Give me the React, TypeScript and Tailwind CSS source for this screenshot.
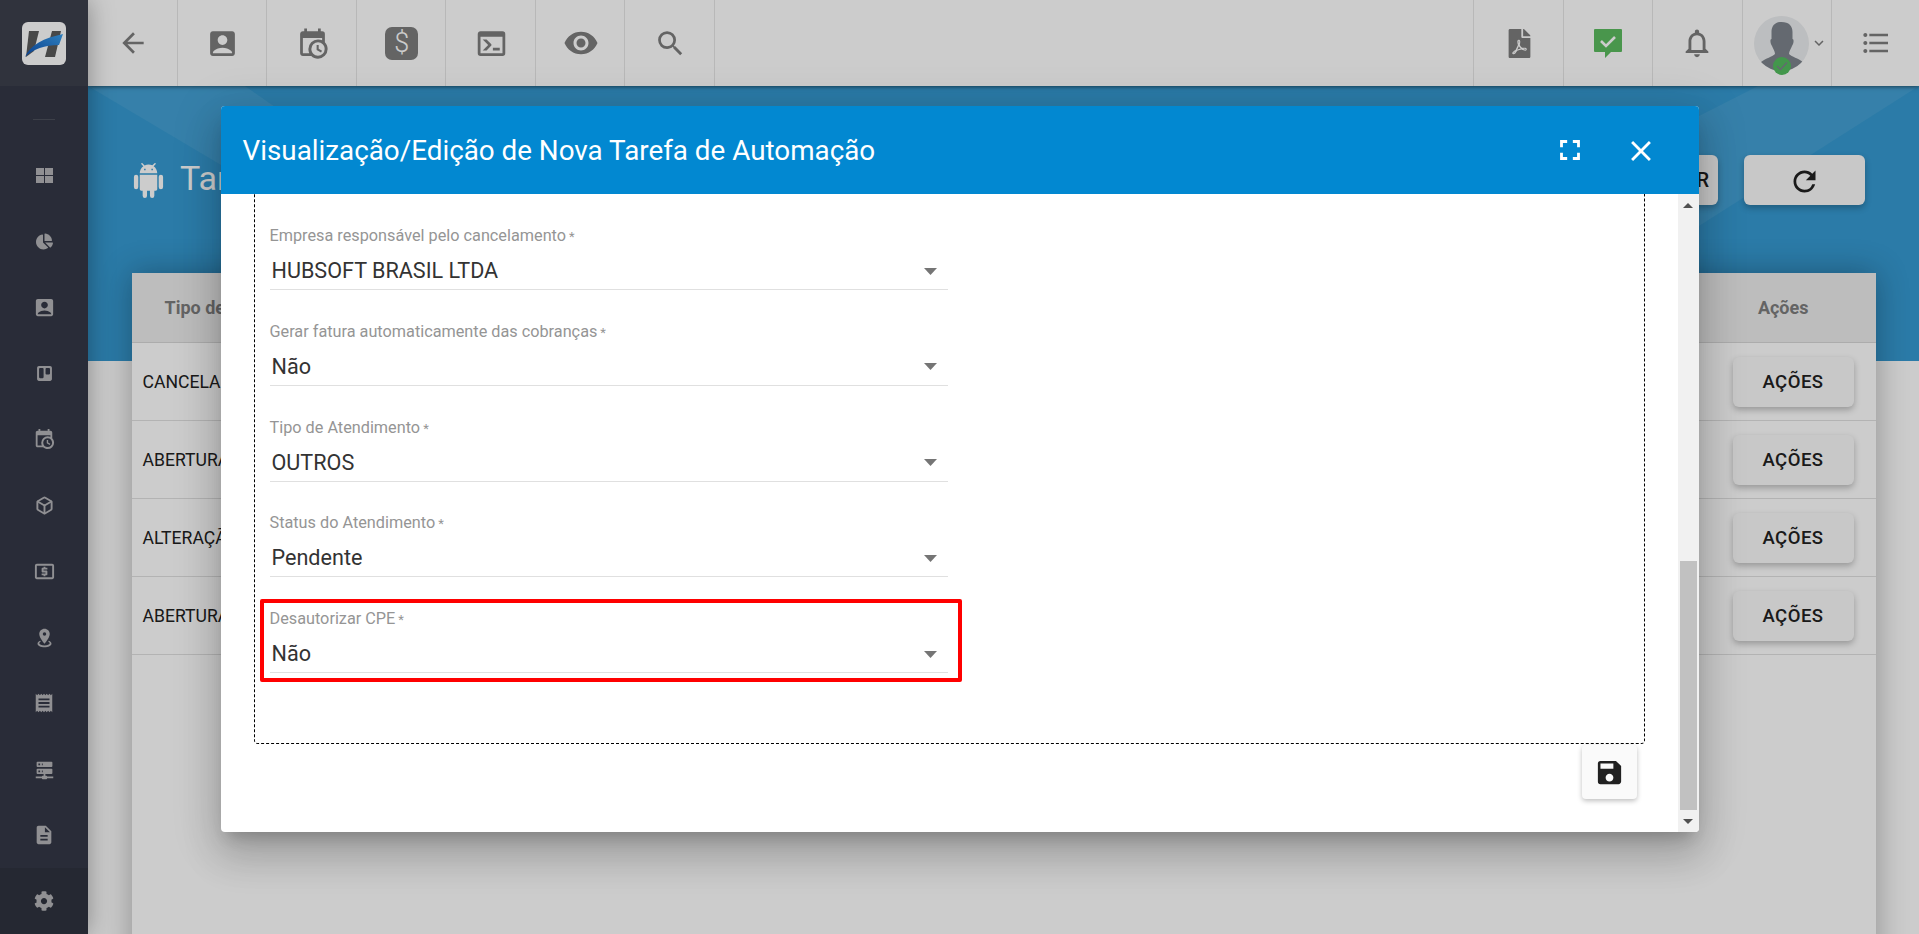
import { FaChartPie, FaCog, FaFilePdf, FaTrello } from "react-icons/fa"
import {
  MdAccountBox,
  MdArrowBack,
  MdClose,
  MdDescription,
  MdFormatListBulleted,
  MdFullscreen,
  MdKeyboardArrowDown,
  MdLocalAtm,
  MdNotificationsNone,
  MdRefresh,
  MdRemoveRedEye,
  MdSave,
  MdSearch,
} from "react-icons/md"
import { Box } from "lucide-react"

const ANDROID =
  "M15,5H14V4H15M10,5H9V4H10M15.53,2.16L16.84,0.85C17.03,0.66 17.03,0.34 16.84,0.14C16.64,-0.05 16.32,-0.05 16.13,0.14L14.65,1.62C13.85,1.23 12.95,1 12,1C11.04,1 10.14,1.23 9.34,1.63L7.85,0.14C7.66,-0.05 7.34,-0.05 7.15,0.14C6.95,0.34 6.95,0.66 7.15,0.85L8.46,2.16C6.97,3.26 6,5 6,7H18C18,5 17,3.25 15.53,2.16M20.5,8A1.5,1.5 0 0,0 19,9.5V16.5A1.5,1.5 0 0,0 20.5,18A1.5,1.5 0 0,0 22,16.5V9.5A1.5,1.5 0 0,0 20.5,8M3.5,8A1.5,1.5 0 0,0 2,9.5V16.5A1.5,1.5 0 0,0 3.5,18A1.5,1.5 0 0,0 5,16.5V9.5A1.5,1.5 0 0,0 3.5,8M6,18A1,1 0 0,0 7,19H8V22.5A1.5,1.5 0 0,0 9.5,24A1.5,1.5 0 0,0 11,22.5V19H13V22.5A1.5,1.5 0 0,0 14.5,24A1.5,1.5 0 0,0 16,22.5V19H17A1,1 0 0,0 18,18V8H6V18Z"
const CALENDAR_CLOCK =
  "M15,13H16.5V15.82L18.94,17.23L18.19,18.53L15,16.69V13M19,8H5V19H9.67C9.24,18.09 9,17.07 9,16A7,7 0 0,1 16,9C17.07,9 18.09,9.24 19,9.67V8M5,21C3.89,21 3,20.1 3,19V5C3,3.89 3.89,3 5,3H6V1H8V3H16V1H18V3H19A2,2 0 0,1 21,5V11.1C22.24,12.36 23,14.09 23,16A7,7 0 0,1 16,23C14.09,23 12.36,22.24 11.1,21H5M16,11.15A4.85,4.85 0 0,0 11.15,16C11.15,18.68 13.32,20.85 16,20.85A4.85,4.85 0 0,0 20.85,16C20.85,13.32 18.68,11.15 16,11.15Z"
const CONSOLE =
  "M20,19V7H4V19H20M20,3A2,2 0 0,1 22,5V19A2,2 0 0,1 20,21H4A2,2 0 0,1 2,19V5C2,3.89 2.9,3 4,3H20M13,17V15H18V17H13M9.58,13L5.57,9H8.4L11.7,12.3C12.09,12.69 12.09,13.33 11.7,13.72L8.42,17H5.59L9.58,13Z"
const MARKER_RADIUS =
  "M12,2C15.31,2 18,4.66 18,7.95C18,12.41 12,19 12,19C12,19 6,12.41 6,7.95C6,4.66 8.69,2 12,2M12,6A2,2 0 0,0 10,8A2,2 0 0,0 12,10A2,2 0 0,0 14,8A2,2 0 0,0 12,6M20,19C20,21.21 16.42,23 12,23C7.58,23 4,21.21 4,19C4,17.71 5.22,16.56 7.11,15.83L7.75,16.74C6.67,17.19 6,17.81 6,18.5C6,19.88 8.69,21 12,21C15.31,21 18,19.88 18,18.5C18,17.81 17.33,17.19 16.25,16.74L16.89,15.83C18.78,16.56 20,17.71 20,19Z"
const RECEIPT =
  "M3,22L4.5,20.5L6,22L7.5,20.5L9,22L10.5,20.5L12,22L13.5,20.5L15,22L16.5,20.5L18,22L19.5,20.5L21,22V2L19.5,3.5L18,2L16.5,3.5L15,2L13.5,3.5L12,2L10.5,3.5L9,2L7.5,3.5L6,2L4.5,3.5L3,2M18,9H6V7H18M18,13H6V11H18M18,17H6V15H18V17Z"
const SERVER_NETWORK =
  "M13,19H14A1,1 0 0,1 15,20H22V22H15A1,1 0 0,1 14,23H10A1,1 0 0,1 9,22H2V20H9A1,1 0 0,1 10,19H11V17H4A1,1 0 0,1 3,16V12A1,1 0 0,1 4,11H20A1,1 0 0,1 21,12V16A1,1 0 0,1 20,17H13V19M4,3H20A1,1 0 0,1 21,4V8A1,1 0 0,1 20,9H4A1,1 0 0,1 3,8V4A1,1 0 0,1 4,3M9,7H10V5H9V7M9,15H10V13H9V15M5,5V7H7V5H5M5,13V15H7V13H5Z"

function PathIcon({ d, size, className }: { d: string; size: number; className?: string }) {
  return (
    <svg width={size} height={size} viewBox="0 0 24 24" fill="currentColor" className={className}>
      <path d={d} />
    </svg>
  )
}

function GridIcon() {
  return (
    <svg width="17" height="15" viewBox="0 0 17 15" fill="currentColor">
      <rect x="0" y="0" width="8" height="7" />
      <rect x="9" y="0" width="8" height="7" />
      <rect x="0" y="8" width="8" height="7" />
      <rect x="9" y="8" width="8" height="7" />
    </svg>
  )
}

function Logo() {
  return (
    <div className="w-[44px] h-[43px] rounded-[6px] bg-white">
      <svg width="44" height="43" viewBox="0 0 44 43">
        <defs>
          <linearGradient id="swoosh" x1="0" y1="1" x2="1" y2="0">
            <stop offset="0" stopColor="#0d4fb0" />
            <stop offset="1" stopColor="#3aa0ee" />
          </linearGradient>
        </defs>
        <path d="M7 9h10l-5 20-8 6z" fill="#5a5a5a" />
        <path d="M30 9h9l-6 26H23z" fill="#5a5a5a" />
        <path d="M3 35C8 23 22 16 41 12l-4 11C23 23 11 27 3 35z" fill="url(#swoosh)" />
      </svg>
    </div>
  )
}

function CheckBubble() {
  return (
    <svg width="28" height="29" viewBox="0 0 28 29">
      <path d="M1 0h26a1 1 0 0 1 1 1v21a1 1 0 0 1-1 1H17l-6 6v-6H1a1 1 0 0 1-1-1V1a1 1 0 0 1 1-1z" fill="#5cbc5f" />
      <path d="M7 12l5 5 9-9" fill="none" stroke="#fff" strokeWidth="2.6" />
    </svg>
  )
}

function Avatar() {
  return (
    <div className="relative w-[55px] h-[55px] rounded-full bg-[#eceef0] overflow-hidden">
      <svg width="55" height="55" viewBox="0 0 55 55" className="text-[#7d848c]">
        <path
          d="M27.5 6c7.500 0 11 4 11 10v7c1.500 0 1.500 4-.5 7-1 3-3 5-3 8 3 3 9 4 14 8v9H7v-9c5-4 11-5 14-8 0-3-2-5-3-8-2-3-2-7-.5-7v-7c0-6 3.500-10 10-10z"
          fill="currentColor"
        />
      </svg>
    </div>
  )
}

function Caret() {
  return (
    <svg width="13" height="7" viewBox="0 0 13 7" className="mr-[11px]">
      <path d="M0 0h13L6.500 7z" fill="#757575" />
    </svg>
  )
}

function Field({ label, value, marked }: { label: string; value: string; marked?: boolean }) {
  return (
    <div className="relative w-[678px] h-[65px] mb-[30.750px] shrink-0">
      <div className="text-[16.250px] leading-[20px] text-[#959595]">
        {label}
        <span className="ml-[3px] text-[13px]">*</span>
      </div>
      <div className="mt-[9px] h-[30px] pb-[3px] flex items-center justify-between border-b border-[#e0e0e0] box-content">
        <span className="pl-[2px] text-[21.600px] leading-[30px] text-[#333333]">{value}</span>
        <Caret />
      </div>
      {marked && (
        <div className="absolute -left-[10px] -right-[14px] -top-[10px] -bottom-[8px] border-4 border-[#ff0000] rounded-[2px]" />
      )}
    </div>
  )
}

const topLeft = [
  <MdArrowBack size={32} />,
  <MdAccountBox size={33} />,
  <PathIcon d={CALENDAR_CLOCK} size={33} />,
  <div className="w-[33px] h-[33px] rounded-[7px] bg-current flex items-center justify-center">
    <span className="text-white text-[27px] leading-none font-light">$</span>
  </div>,
  <PathIcon d={CONSOLE} size={33} />,
  <MdRemoveRedEye size={36} />,
  <MdSearch size={33} />,
]

const sideItems = [
  <GridIcon />,
  <FaChartPie size={17} />,
  <MdAccountBox size={23} />,
  <FaTrello size={17} />,
  <PathIcon d={CALENDAR_CLOCK} size={22} />,
  <Box size={19} strokeWidth={2.4} />,
  <MdLocalAtm size={23} />,
  <PathIcon d={MARKER_RADIUS} size={21} />,
  <PathIcon d={RECEIPT} size={22} />,
  <PathIcon d={SERVER_NETWORK} size={21} />,
  <MdDescription size={22} />,
]

const rows = ["CANCELA", "ABERTURA", "ALTERAÇÃ", "ABERTURA"]

const fields = [
  { label: "Empresa responsável pelo cancelamento", value: "HUBSOFT BRASIL LTDA" },
  { label: "Gerar fatura automaticamente das cobranças", value: "Não" },
  { label: "Tipo de Atendimento", value: "OUTROS" },
  { label: "Status do Atendimento", value: "Pendente" },
  { label: "Desautorizar CPE", value: "Não", marked: true },
]

export default function App() {
  return (
    <div className="relative h-[934px] w-full overflow-hidden flex bg-white font-['Roboto',sans-serif]">
      {/* Sidebar */}
      <aside className="relative z-20 w-[88px] shrink-0 flex flex-col bg-[#343846] text-[#b4b4b8] shadow-[0_0_24px_rgba(0,0,0,0.35)]">
        <div className="h-[86px] shrink-0 flex items-center justify-center bg-[#3d404d]">
          <Logo />
        </div>
        <div className="h-[56px] shrink-0 pt-[33px]">
          <div className="mx-auto w-[22px] h-px bg-[#4d505c]" />
        </div>
        {sideItems.map((icon, i) => (
          <div key={i} className="h-[66px] shrink-0 flex items-center justify-center">
            {icon}
          </div>
        ))}
        <div className="flex-1 flex items-center justify-center bg-[#2f333f]">
          <FaCog size={20} />
        </div>
      </aside>

      <main className="flex-1 min-w-0 flex flex-col">
        {/* Top bar */}
        <header className="relative z-10 h-[86px] shrink-0 flex bg-white text-[#7d7d7d] shadow-[0_1px_4px_rgba(0,0,0,0.5)]">
          {topLeft.map((icon, i) => (
            <div key={i} className="w-[89.500px] shrink-0 pl-[2px] flex items-center justify-center border-r-[1.500px] border-[#e6e6e6]">
              {icon}
            </div>
          ))}
          <div className="flex-1" />
          <div className="w-[89.500px] pl-[2px] flex items-center justify-center border-l-[1.500px] border-[#e6e6e6]">
            <FaFilePdf size={29} />
          </div>
          <div className="w-[89.500px] flex items-center justify-center border-l-[1.500px] border-[#e6e6e6]">
            <CheckBubble />
          </div>
          <div className="w-[89.500px] flex items-center justify-center border-l-[1.500px] border-[#e6e6e6]">
            <MdNotificationsNone size={34} />
          </div>
          <div className="relative w-[89.500px] flex items-center pl-[11px] border-l-[1.500px] border-[#e6e6e6]">
            <Avatar />
            <MdKeyboardArrowDown size={18} className="ml-[1px]" />
            <div className="absolute left-[30px] bottom-[11px] w-[18px] h-[18px] rounded-full bg-[#54bd60] flex items-center justify-center">
              <svg width="12" height="10" viewBox="0 0 12 10">
                <path d="M1 5l3.500 3.500L11 1.500" fill="none" stroke="#7d848c" strokeWidth="1.500" />
              </svg>
            </div>
          </div>
          <div className="w-[88px] flex items-center justify-center border-l-[1.500px] border-[#e6e6e6]">
            <MdFormatListBulleted size={32} />
          </div>
        </header>

        {/* Page */}
        <div className="relative h-[275px] shrink-0 bg-[#369ad2] overflow-hidden">
          <svg className="absolute inset-0 w-full h-full" viewBox="0 0 1831 275" preserveAspectRatio="none">
            <path d="M0 0H157L300 100 133 79z" fill="#ffffff" fillOpacity="0.07" />
            <path d="M1670 0H1831L1611 140V30z" fill="#ffffff" fillOpacity="0.07" />
          </svg>
          <div className="relative flex items-start pt-[69px] pl-[43px] pr-[54px]">
            <PathIcon d={ANDROID} size={35} className="text-white mt-[8px]" />
            <h1 className="ml-[14px] -mt-[2px] text-[34px] leading-[50px] text-white">Tar</h1>
            <div className="ml-auto flex gap-[26px]">
              <button className="w-[200px] h-[50px] rounded-[6px] bg-[#fafafa] text-[20px] font-medium text-[#212121] text-right pr-[9px] shadow-[0_3px_6px_rgba(0,0,0,0.25)]">
                ADICIONAR
              </button>
              <button className="w-[121px] h-[50px] pt-[2px] rounded-[6px] bg-[#fafafa] text-[#212121] flex items-center justify-center shadow-[0_3px_6px_rgba(0,0,0,0.25)]">
                <MdRefresh size={33} />
              </button>
            </div>
          </div>
        </div>

        <div className="flex-1 min-h-0 px-[43.500px] -mt-[88px] relative">
          <div className="bg-white h-[700px] shadow-[0_0_30px_rgba(0,0,0,0.3)]">
            <div className="h-[70px] flex items-center justify-between pl-[33px] pr-[67px] bg-[#ededed] border-b border-[#d8d8d8] text-[18px] font-bold text-[#7d7d7d]">
              <span>Tipo de</span>
              <span>Ações</span>
            </div>
            {rows.map((row, i) => (
              <div key={i} className="h-[78px] flex items-center justify-between pl-[11px] pr-[22px] border-b border-[#e0e0e0]">
                <span className="pt-[2px] whitespace-nowrap text-[17.600px] text-[#212121]">{row}</span>
                <button className="w-[121px] h-[50px] pt-[2px] rounded-[6px] bg-[#fafafa] text-[18.500px] font-medium tracking-[0.5px] text-[#212121] shadow-[0_3px_6px_rgba(0,0,0,0.25)]">
                  AÇÕES
                </button>
              </div>
            ))}
          </div>
        </div>
      </main>

      {/* Dialog */}
      <div className="absolute inset-0 z-30 bg-black/20 flex justify-center pt-[106px]">
        <div className="w-[1478px] h-[726px] rounded-[4px] overflow-hidden bg-white flex flex-col shadow-[0_11px_15px_-7px_rgba(0,0,0,0.2),0_24px_38px_3px_rgba(0,0,0,0.14),0_9px_46px_8px_rgba(0,0,0,0.12)]">
          <div className="h-[88px] shrink-0 flex items-center bg-[#0288d1] pl-[22px] text-white">
            <h2 className="pt-[2px] text-[27.800px] font-normal">Visualização/Edição de Nova Tarefa de Automação</h2>
            <MdFullscreen size={34} className="ml-auto mr-[37px]" />
            <MdClose size={34} className="mt-[2px] mr-[41px]" />
          </div>
          <div className="flex-1 min-h-0 flex">
            <div className="flex-1 min-w-0 overflow-hidden">
              <div className="h-[570px] -mt-[20px] ml-[33px] w-[1391px] rounded-[4px] border border-dashed border-black pl-[15px] pt-[51px] flex flex-col">
                {fields.map((f) => (
                  <Field key={f.label} {...f} />
                ))}
              </div>
              <div className="flex justify-end pr-[41px] mt-px">
                <button className="w-[55px] h-[54px] rounded-[4px] bg-[#fafafa] flex items-center justify-center text-[#212121] shadow-[0_2px_5px_rgba(0,0,0,0.25)]">
                  <MdSave size={31} />
                </button>
              </div>
            </div>
            <div className="w-[21px] shrink-0 bg-[#f1f1f1] flex flex-col items-center">
              <svg width="10" height="5" viewBox="0 0 10 5" className="mt-[9px]">
                <path d="M0 5h10L5 0z" fill="#505050" />
              </svg>
              <div className="mt-auto w-[17px] h-[249px] bg-[#c1c1c1]" />
              <div className="h-[22px] flex items-center">
                <svg width="10" height="5" viewBox="0 0 10 5">
                  <path d="M0 0h10L5 5z" fill="#505050" />
                </svg>
              </div>
            </div>
          </div>
        </div>
      </div>
    </div>
  )
}
